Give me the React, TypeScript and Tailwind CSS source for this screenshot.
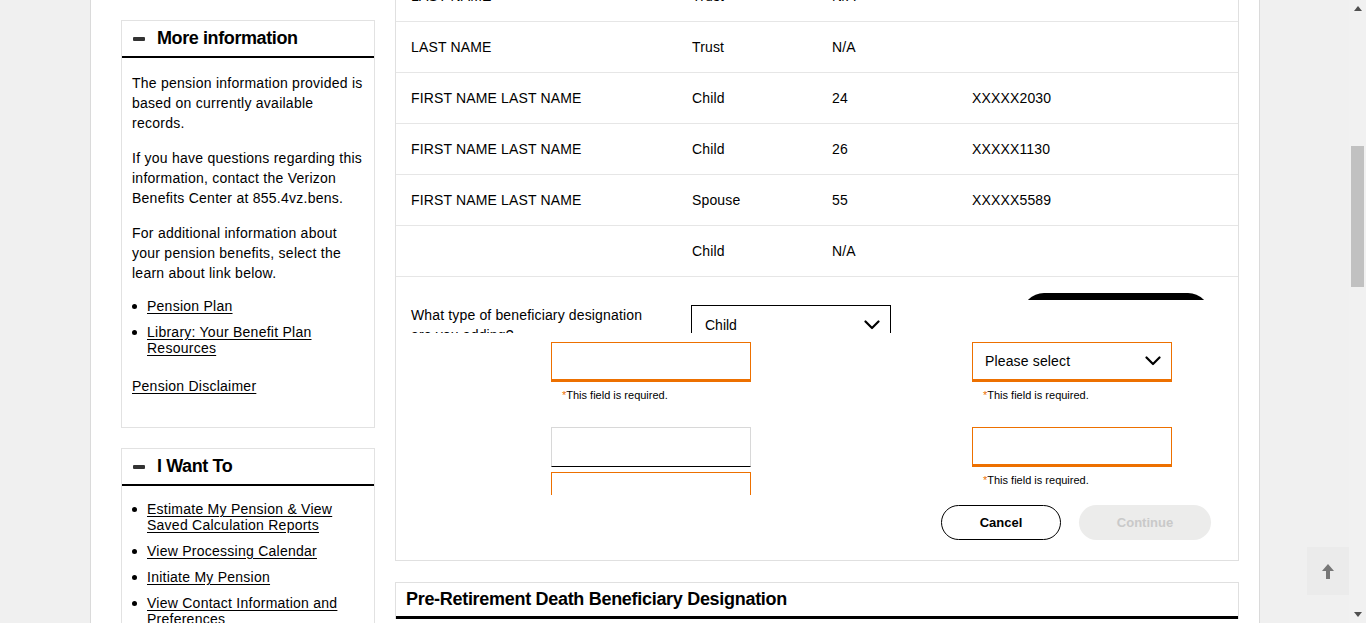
import React from "react";

const Chevron = ({ className = "" }: { className?: string }) => (
  <svg className={className} width="16" height="10" viewBox="0 0 16 10" fill="none">
    <polyline points="1.5,1.5 8,8 14.5,1.5" stroke="#000" strokeWidth="2.2" strokeLinecap="round" strokeLinejoin="round" />
  </svg>
);

const Minus = () => <span className="block h-[4px] w-[12px] rounded-[1px] bg-[#333]" />;

const Bullet = ({ children }: { children: React.ReactNode }) => (
  <li className="flex leading-[16px]">
    <span className="mt-[6px] mr-[10px] h-[5px] w-[5px] shrink-0 rounded-full bg-black" />
    <a href="#" className="text-black underline underline-offset-[2px]">
      {children}
    </a>
  </li>
);

const rows: [string, string, string, string][] = [
  ["LAST NAME", "Trust", "N/A", ""],
  ["LAST NAME", "Trust", "N/A", ""],
  ["FIRST NAME LAST NAME", "Child", "24", "XXXXX2030"],
  ["FIRST NAME LAST NAME", "Child", "26", "XXXXX1130"],
  ["FIRST NAME LAST NAME", "Spouse", "55", "XXXXX5589"],
  ["", "Child", "N/A", ""],
];

const Helper = () => (
  <div className="mt-[6px] h-[14px] pl-[11px] text-[11px] leading-[14px] text-black">
    <span className="text-[#ed7000]">*</span>This field is required.
  </div>
);

export default function App() {
  return (
    <div className="flex h-[623px] w-[1366px] overflow-hidden bg-[#f0f0f0] font-['Liberation_Sans',Arial,sans-serif] text-black">
      <div className="relative flex-1">
        <div className="ml-[90px] flex h-full w-[1170px] border-x border-[#dadada] bg-white pl-[30px] pr-[20px]">
          {/* Sidebar */}
          <aside className="w-[254px] shrink-0 pt-[20px]">
            <section className="border border-[#e2e2e2]">
              <div className="flex h-[37px] items-center gap-[12px] border-b-[2px] border-black pl-[11px]">
                <Minus />
                <h2 className="text-[18px] font-bold tracking-[-0.4px]">More information</h2>
              </div>
              <div className="px-[10px] pt-[15px] pb-[31px] text-[14px] leading-[20px] tracking-[0.25px]">
                <p className="mb-[15px]">The pension information provided is based on currently available records.</p>
                <p className="mb-[15px]">
                  If you have questions regarding this information, contact the Verizon Benefits Center at 855.4vz.bens.
                </p>
                <p className="mb-[15px]">
                  For additional information about your pension benefits, select the learn about link below.
                </p>
                <ul className="flex flex-col gap-[10px]">
                  <Bullet>Pension Plan</Bullet>
                  <Bullet>
                    Library: Your Benefit Plan
                    <br />
                    Resources
                  </Bullet>
                </ul>
                <p className="mt-[20px]">
                  <a href="#" className="underline underline-offset-[2px]">
                    Pension Disclaimer
                  </a>
                </p>
              </div>
            </section>
            <section className="mt-[20px] border border-[#e2e2e2]">
              <div className="flex h-[37px] items-center gap-[12px] border-b-[2px] border-black pl-[11px]">
                <Minus />
                <h2 className="text-[18px] font-bold tracking-[-0.4px]">I Want To</h2>
              </div>
              <ul className="flex flex-col gap-[10px] px-[10px] pt-[15px] pb-[20px] text-[14px] tracking-[0.25px]">
                <Bullet>
                  Estimate My Pension &amp; View
                  <br />
                  Saved Calculation Reports
                </Bullet>
                <Bullet>View Processing Calendar</Bullet>
                <Bullet>Initiate My Pension</Bullet>
                <Bullet>
                  View Contact Information and
                  <br />
                  Preferences
                </Bullet>
              </ul>
            </section>
          </aside>

          {/* Main */}
          <main className="ml-[20px] w-[844px] shrink-0">
            <div className="-mt-[30px] border border-[#e0e0e0]">
              {rows.map((r, i) => (
                <div key={i} className="flex h-[51px] items-center border-b border-[#e6e6e6] text-[14px] tracking-[0.15px]">
                  <div className="w-[296px] pl-[15px]">{r[0]}</div>
                  <div className="w-[140px]">{r[1]}</div>
                  <div className="w-[140px]">{r[2]}</div>
                  <div className="flex-1">{r[3]}</div>
                </div>
              ))}

              {/* Form top (clipped) */}
              <div className="flex h-[56px] overflow-hidden">
                <div className="w-[295px] shrink-0 pl-[15px] pr-[40px] pt-[28px] text-[14px] leading-[20px] tracking-[0.15px]">
                  What type of beneficiary designation are you adding?
                </div>
                <div className="mt-[28px] flex h-[40px] w-[200px] shrink-0 items-center justify-between border border-black pl-[13px] pr-[10px] text-[14px]">
                  <span>Child</span>
                  <Chevron />
                </div>
                <div className="ml-[131px] h-[23px] overflow-hidden">
                  <div className="mt-[16px] h-[44px] w-[188px] rounded-[22px] bg-black" />
                </div>
              </div>

              {/* Fields */}
              <div className="flex pl-[155px]">
                <div className="h-[162px] w-[200px] shrink-0 overflow-hidden pt-[9px]">
                  <div className="h-[40px] border border-b-[3px] border-[#ed7000]" />
                  <Helper />
                  <div className="mt-[25px] h-[40px] border border-[#d8d8d8] border-b-black" />
                  <div className="mt-[5px] h-[40px] border border-b-[3px] border-[#ed7000]" />
                </div>
                <div className="ml-[221px] w-[200px] shrink-0 pt-[9px]">
                  <div className="flex h-[40px] items-center justify-between border border-b-[3px] border-[#ed7000] pl-[12px] pr-[10px] text-[14px] tracking-[0.15px]">
                    <span>Please select</span>
                    <Chevron />
                  </div>
                  <Helper />
                  <div className="mt-[25px] h-[40px] border border-b-[3px] border-[#ed7000]" />
                  <Helper />
                </div>
              </div>

              <div className="mt-[10px] flex justify-end gap-[18px] pb-[20px] pr-[27px]">
                <button className="h-[35px] w-[120px] rounded-full border border-black bg-white text-[13px] font-bold">
                  Cancel
                </button>
                <button className="h-[35px] w-[132px] rounded-full bg-[#ececeb] text-[13px] font-bold text-[#c9c9c9]">
                  Continue
                </button>
              </div>
            </div>

            <div className="mt-[21px] border-x border-t border-[#e0e0e0]">
              <div className="flex h-[36px] items-center border-b-[3px] border-black pl-[10px]">
                <h2 className="text-[18px] font-bold tracking-[-0.3px]">Pre-Retirement Death Beneficiary Designation</h2>
              </div>
            </div>
          </main>
        </div>

        {/* back to top */}
        <button className="absolute right-0 top-[547px] flex h-[48px] w-[42px] items-center justify-center bg-[#ebebeb]">
          <svg width="12" height="15" viewBox="0 0 12 15">
            <polygon points="6,0 12,7 8,7 8,15 4,15 4,7 0,7" fill="#777" />
          </svg>
        </button>
      </div>

      {/* Scrollbar */}
      <div className="flex w-[17px] flex-col bg-[#f1f1f1]">
        <div className="flex h-[17px] items-center justify-center">
          <svg width="8" height="5" viewBox="0 0 8 5">
            <polygon points="4,0 8,5 0,5" fill="#505050" />
          </svg>
        </div>
        <div className="flex-1 pl-[2px]">
          <div className="mt-[129px] h-[141px] w-[13px] bg-[#c1c1c1]" />
        </div>
        <div className="flex h-[17px] items-center justify-center">
          <svg width="8" height="5" viewBox="0 0 8 5">
            <polygon points="0,0 8,0 4,5" fill="#505050" />
          </svg>
        </div>
      </div>
    </div>
  );
}
